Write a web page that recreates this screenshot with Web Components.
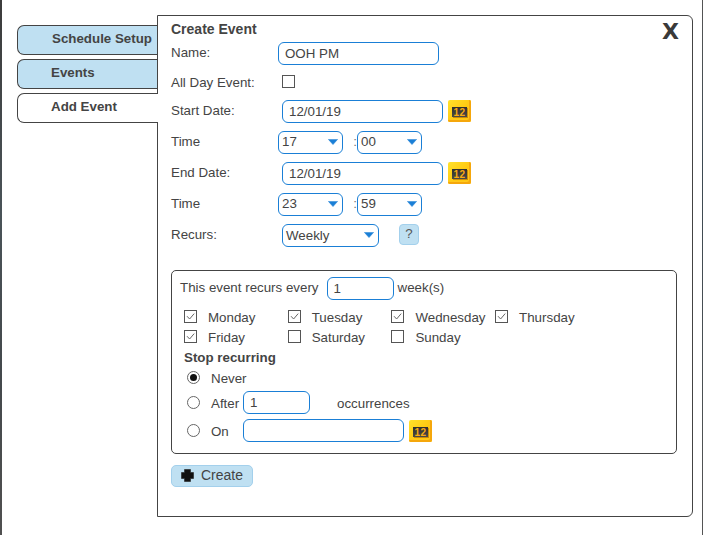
<!DOCTYPE html>
<html lang="en"><head><meta charset="utf-8"><title>Create Event</title>
<style>
html,body{margin:0;padding:0;background:#fff}
body{font:13.33px/16px "Liberation Sans",Arial,sans-serif;color:#444}
</style></head>
<body>
<x-app>
  <x-tabs slot="tabs">
    <x-tab pad="34">Schedule Setup</x-tab>
    <x-tab pad="33">Events</x-tab>
    <x-tab pad="33" active>Add Event</x-tab>
  </x-tabs>
  <x-panel slot="panel">
    <x-row title><b>Create Event</b></x-row>
    <x-row label="Name:"><x-field w="161">OOH PM</x-field></x-row>
    <x-row label="All Day Event:" short><x-check></x-check></x-row>
    <x-row label="Start Date:" inset><x-field w="161">12/01/19</x-field><x-cal></x-cal></x-row>
    <x-row label="Time"><x-select w="65">17</x-select><x-colon></x-colon><x-select w="65">00</x-select></x-row>
    <x-row label="End Date:" inset><x-field w="161">12/01/19</x-field><x-cal></x-cal></x-row>
    <x-row label="Time"><x-select w="65">23</x-select><x-colon></x-colon><x-select w="65">59</x-select></x-row>
    <x-row label="Recurs:" inset><x-select w="97" pad="3">Weekly</x-select><x-help>?</x-help></x-row>
    <x-recur>
      <x-every>This event recurs every<x-field w="67" slot="field">1</x-field></x-every>
      <x-days>
        <x-day checked>Monday</x-day><x-day checked>Tuesday</x-day><x-day checked>Wednesday</x-day><x-day checked>Thursday</x-day>
        <x-day checked>Friday</x-day><x-day>Saturday</x-day><x-day>Sunday</x-day>
      </x-days>
      <x-stop>Stop recurring</x-stop>
      <x-option checked label="Never"></x-option>
      <x-option label="After"><x-field w="67">1</x-field><x-note>occurrences</x-note></x-option>
      <x-option label="On"><x-field w="161"></x-field><x-cal></x-cal></x-option>
    </x-recur>
    <x-create>Create</x-create>
  </x-panel>
</x-app>
<script>
const def=(name,css,html,extra)=>{
  customElements.define(name,class extends HTMLElement{
    constructor(){super();const r=this.attachShadow({mode:'open'});
      r.innerHTML='<style>'+css+'</style>'+html;}
    connectedCallback(){extra&&extra(this,this.shadowRoot)}
  });
};
def('x-app',`:host{display:flex;align-items:flex-start;box-sizing:border-box;width:703px;height:535px;padding:15px 10px 0 17px;
  background:linear-gradient(#3c3c3c,#4a5358 40%,#44494c 70%,#505050) left top/2px 100% no-repeat,linear-gradient(#555,#3d4a52 30%,#555) right top/1px 100% no-repeat}`,
  `<slot name="tabs"></slot><slot name="panel"></slot>`);
def('x-tabs',`:host{display:flex;flex-direction:column;gap:4px;width:141px;margin:10px -1px 0 0;flex:none}`,`<slot></slot>`);
def('x-tab',`:host{display:block;position:relative;box-sizing:border-box;height:30px;line-height:25px;border:1px solid #444;border-right:0;border-radius:7px 0 0 7px;background:#bfe0f2;font-weight:bold;color:#444;z-index:0;white-space:nowrap}
  :host([active]){background:#fff;z-index:2}`,`<slot></slot>`,
  (h)=>{h.style.paddingLeft=h.getAttribute('pad')+'px'});
def('x-panel',`:host{display:flex;flex-direction:column;gap:8px;position:relative;z-index:1;box-sizing:border-box;width:536px;height:502px;padding:5px 15px 0 13px;border:1px solid #444;border-radius:0 6px 6px 0;background:#fff;flex:none}
  .x{position:absolute;top:3px;right:13px;font:bold 22px/26px "DejaVu Sans",sans-serif;color:#3a3a3a}`,
  `<span class="x">X</span><slot></slot>`);
def('x-row',`:host{display:flex;align-items:flex-start;height:23px}
  :host([title]){height:16px;margin-bottom:-3px;font-size:14px}
  :host([short]){height:19px}
  .l{flex:none;width:107px;padding-top:3px;white-space:nowrap}
  :host([title]) .l{display:none}
  :host([inset]) .c{padding-left:4px}
  :host([short]) .c{padding:2px 0 0 4px}
  :host([short]) .l{padding-top:2px}
  :host([title]) .c{display:block}
  .c{display:flex;align-items:flex-start}`,
  `<span class="l"></span><div class="c"><slot></slot></div>`,
  (h,r)=>{r.querySelector('.l').textContent=h.getAttribute('label')||''});
def('x-field',`:host{display:block;box-sizing:border-box;height:23px;flex:none;border:1px solid #1a7fd6;border-radius:6px;padding:0 6px;line-height:22px;color:#444;background:#fff;white-space:nowrap}`,`<slot></slot>`,
  (h)=>{h.style.width=h.getAttribute('w')+'px'});
def('x-select',`:host{display:block;position:relative;box-sizing:border-box;height:23px;flex:none;border:1px solid #1a7fd6;border-radius:6px;padding:0 3px;line-height:19px;color:#444;background:#fff}
  svg{position:absolute;right:4px;top:7px;width:10px;height:6px}`,
  `<slot></slot><svg viewBox="0 0 10 6"><path d="M.4.4h9.2L5 5.6z" fill="#1a7fd6" stroke="#1a7fd6" stroke-width=".5" stroke-linejoin="round"/></svg>`,
  (h)=>{h.style.width=h.getAttribute('w')+'px';if(h.getAttribute('w')==='97')h.style.lineHeight='21px'});
def('x-colon',`:host{display:block;flex:none;width:14px;text-align:right;box-sizing:border-box;line-height:21px;color:#777}`,`:`);
def('x-check',`:host{display:block;width:13px;height:13px;flex:none;box-sizing:border-box;border:1px solid #555;background:#fff}
  svg{display:none;width:11px;height:11px}
  :host([checked]) svg{display:block}`,
  `<svg viewBox="0 0 11 11"><path d="M2 5.2 4.6 8 9.2 2.6" fill="none" stroke="#666" stroke-width="1"/></svg>`);
def('x-cal',`:host{display:block;position:relative;flex:none;box-sizing:border-box;width:23px;height:22px;margin-left:5px;border-radius:2px;
   background:linear-gradient(135deg,#ffe22c,#ffc70f 60%);box-shadow:inset -2px -2px 0 #f5a70c,inset -3px -3px 0 #ffc81a}
  .d{position:absolute;left:4px;top:7px;width:15px;height:10px;background:linear-gradient(#2f2f2f,#4a4a46);box-shadow:1px 1px 0 #c98c08;color:#f6ab13;font:bold 10px/11px "Liberation Sans",sans-serif;letter-spacing:.5px;text-align:center}`,
  `<span class="d">12</span>`);
def('x-help',`:host{display:block;box-sizing:border-box;flex:none;width:20px;height:21px;margin-left:20px;background:#bfe0f2;border:1px solid #a3d0ec;border-radius:4px;text-align:center;line-height:18px;color:#555}`,`<slot></slot>`);
def('x-recur',`:host{display:block;box-sizing:border-box;height:184px;margin-top:15px;border:1px solid #444;border-radius:5px;padding:6px 0 0 8px}`,`<slot></slot>`);
def('x-every',`:host{display:flex;align-items:flex-start;height:23px;line-height:22px;white-space:nowrap}
  .f{margin:0 4px 0 8px} `,`<slot></slot><span class="f"><slot name="field"></slot></span>week(s)`);
def('x-days',`:host{display:grid;grid-template-columns:repeat(4,103.7px);grid-auto-rows:20px;margin:7px 0 0 4px}`,`<slot></slot>`);
def('x-day',`:host{display:flex;align-items:flex-start;white-space:nowrap;line-height:22px}
  x-check{margin:3px 11px 0 0}`,`<x-check></x-check><slot></slot>`,
  (h,r)=>{if(h.hasAttribute('checked'))r.querySelector('x-check').setAttribute('checked','')});
def('x-stop',`:host{display:block;height:20px;line-height:22px;margin-left:4px;font-weight:bold;color:#444}`,`<slot></slot>`);
def('x-option',`:host{display:flex;align-items:center;height:23px;margin:5px 0 0 7px;white-space:nowrap}
  :host(:first-of-type){height:17px;margin-top:2px}
  .r{flex:none;box-sizing:border-box;width:13px;height:13px;border:1px solid #666;border-radius:50%;margin-right:11px;background:#fff;display:flex;align-items:center;justify-content:center}
  :host([checked]) .r::after{content:"";width:7px;height:7px;border-radius:50%;background:#111}
  .t{flex:none;width:32px;padding-top:2px}`,
  `<span class="r"></span><span class="t"></span><slot></slot>`,
  (h,r)=>{r.querySelector('.t').textContent=h.getAttribute('label')});
def('x-note',`:host{display:block;margin-left:27px;padding-top:2px}`,`<slot></slot>`);
def('x-create',`:host{display:flex;align-items:flex-start;box-sizing:border-box;width:82px;height:22px;margin-top:3px;padding-left:9px;background:#bfe0f2;border:1px solid #a3d0ec;border-radius:5px;color:#444;font-size:14px;line-height:18px}
  svg{width:13px;height:13px;margin:3px 7px 0 0;flex:none}`,
  `<svg viewBox="0 0 13 13"><path d="M3.5.5h6v3h3v6h-3v3h-6v-3h-3v-6h3z" fill="#111" stroke="#222" stroke-width=".6" stroke-linejoin="round"/></svg><slot></slot>`);
</script>
</body></html>
